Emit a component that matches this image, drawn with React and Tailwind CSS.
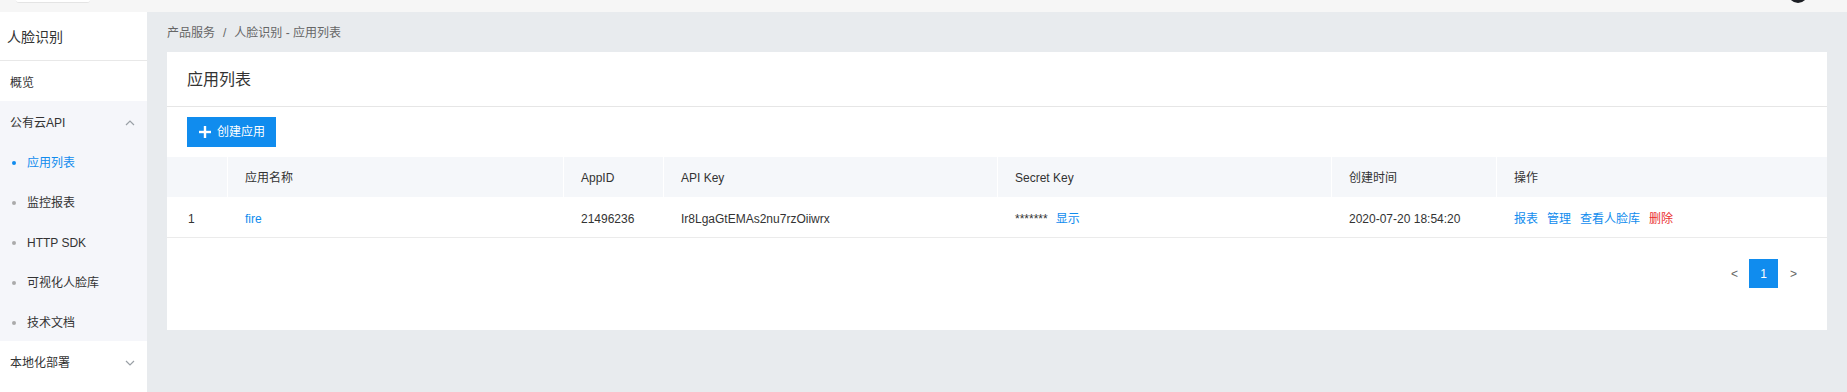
import React from "react";

const font = { fontFamily: '"Liberation Sans", "Noto Sans CJK SC", Arial, sans-serif' };

function Chevron({ up }) {
  return (
    <svg width="12" height="12" viewBox="0 0 12 12" fill="none" stroke="#9aa0a6" strokeWidth="1.2">
      {up ? <path d="M2 8 L6 4 L10 8" /> : <path d="M2 4 L6 8 L10 4" />}
    </svg>
  );
}

function SubItem({ label, active }) {
  return (
    <div className="flex items-center h-10 pl-[12px] pt-[4px]">
      <span className={`w-[4px] h-[4px] rounded-full ${active ? "bg-[#108cee]" : "bg-[#aaa]"}`} />
      <span className={`ml-[11px] text-[12px] ${active ? "text-[#108cee]" : "text-[#333]"}`}>{label}</span>
    </div>
  );
}

const cols = [
  { w: "w-[60px]", pl: "pl-[21px]" },
  { w: "w-[336px]", pl: "pl-[17px]" },
  { w: "w-[100px]", pl: "pl-[17px]" },
  { w: "w-[334px]", pl: "pl-[17px]" },
  { w: "w-[334px]", pl: "pl-[17px]" },
  { w: "w-[165px]", pl: "pl-[17px]" },
  { w: "flex-1", pl: "pl-[17px]" },
];

export default function App() {
  return (
    <div className="w-[1847px] h-[392px] overflow-hidden flex flex-col bg-[#e8ebee]" style={font}>
      {/* top bar */}
      <div className="h-[12px] shrink-0 bg-[#f6f6f6] flex items-end justify-between overflow-hidden">
        <div className="ml-[16px] mb-[9px] w-[74px] h-[10px] rounded-[3px] bg-white border-b border-[#e4e4e4]" />
        <div className="mr-[39px] mb-[9px] w-[20px] h-[20px] rounded-full bg-[#1c1f24] shrink-0" />
      </div>
      <div className="flex flex-1 min-h-0">
        {/* sidebar */}
        <div className="w-[147px] shrink-0 bg-white flex flex-col">
          <div className="h-[49px] flex items-center pl-[7px] pt-[2px] border-b border-[#e8e8e8] text-[14px] text-[#333]">人脸识别</div>
          <div className="h-[40px] flex items-center pl-[10px] pt-[3px] text-[12px] text-[#333]">概览</div>
          <div className="bg-[#f5f6fa] flex flex-col">
            <div className="h-[40px] flex items-center justify-between pl-[10px] pr-[11px] pt-[3px] text-[12px] text-[#333]">
              <span>公有云API</span>
              <Chevron up />
            </div>
            <SubItem label="应用列表" active />
            <SubItem label="监控报表" />
            <SubItem label="HTTP SDK" />
            <SubItem label="可视化人脸库" />
            <SubItem label="技术文档" />
          </div>
          <div className="h-[40px] flex items-center justify-between pl-[10px] pr-[11px] pt-[3px] text-[12px] text-[#333]">
            <span>本地化部署</span>
            <Chevron />
          </div>
        </div>
        {/* main */}
        <div className="flex-1 flex flex-col px-[20px]">
          <div className="h-[40px] flex items-center pt-[1px] text-[12px] text-[#666]">
            产品服务<span className="mx-[8px]">/</span>人脸识别 - 应用列表
          </div>
          <div className="bg-white h-[278px] flex flex-col">
            <div className="h-[55px] flex items-center pl-[20px] pt-[2px] border-b border-[#e6e6e6] text-[16px] text-[#333]">应用列表</div>
            <div className="h-[50px] flex items-center pl-[20px]">
              <button className="h-[30px] pl-[12px] pr-[11px] bg-[#108cee] text-white text-[12px] flex items-center gap-[6px]">
                <svg width="12" height="12" viewBox="0 0 12 12">
                  <rect x="4.8" y="0" width="2.4" height="12" fill="white" />
                  <rect x="0" y="4.8" width="12" height="2.4" fill="white" />
                </svg>
                创建应用
              </button>
            </div>
            {/* table header */}
            <div className="h-[40px] flex bg-[#f5f7fa] text-[12px] text-[#333]">
              {["", "应用名称", "AppID", "API Key", "Secret Key", "创建时间", "操作"].map((t, i) => (
                <div key={i} className={`${cols[i].w} ${cols[i].pl} shrink-0 flex items-center pt-[2px] ${i > 0 ? "border-l border-white" : ""}`}>
                  {t}
                </div>
              ))}
            </div>
            {/* row */}
            <div className="h-[41px] flex border-b border-[#ebebeb] text-[12px] text-[#333] pt-[3px]">
              <div className={`${cols[0].w} ${cols[0].pl} shrink-0 flex items-center`}>1</div>
              <div className={`${cols[1].w} ${cols[1].pl} shrink-0 flex items-center border-l border-transparent text-[#108cee]`}>fire</div>
              <div className={`${cols[2].w} ${cols[2].pl} shrink-0 flex items-center border-l border-transparent`}>21496236</div>
              <div className={`${cols[3].w} ${cols[3].pl} shrink-0 flex items-center border-l border-transparent`}>Ir8LgaGtEMAs2nu7rzOiiwrx</div>
              <div className={`${cols[4].w} ${cols[4].pl} shrink-0 flex items-center border-l border-transparent`}>
                <span>*******</span>
                <span className="ml-[8px] text-[#108cee]">显示</span>
              </div>
              <div className={`${cols[5].w} ${cols[5].pl} shrink-0 flex items-center border-l border-transparent`}>2020-07-20 18:54:20</div>
              <div className={`${cols[6].w} ${cols[6].pl} flex items-center gap-[9px] border-l border-transparent`}>
                <span className="text-[#108cee]">报表</span>
                <span className="text-[#108cee]">管理</span>
                <span className="text-[#108cee]">查看人脸库</span>
                <span className="text-[#ea2e2e]">删除</span>
              </div>
            </div>
            {/* pagination */}
            <div className="flex justify-end items-center pt-[21px] pr-[30px] text-[12px]">
              <span className="text-[#666] mr-[11px]">&lt;</span>
              <span className="w-[29px] h-[29px] bg-[#108cee] text-white flex items-center justify-center">1</span>
              <span className="text-[#666] ml-[12px]">&gt;</span>
            </div>
          </div>
        </div>
      </div>
    </div>
  );
}
